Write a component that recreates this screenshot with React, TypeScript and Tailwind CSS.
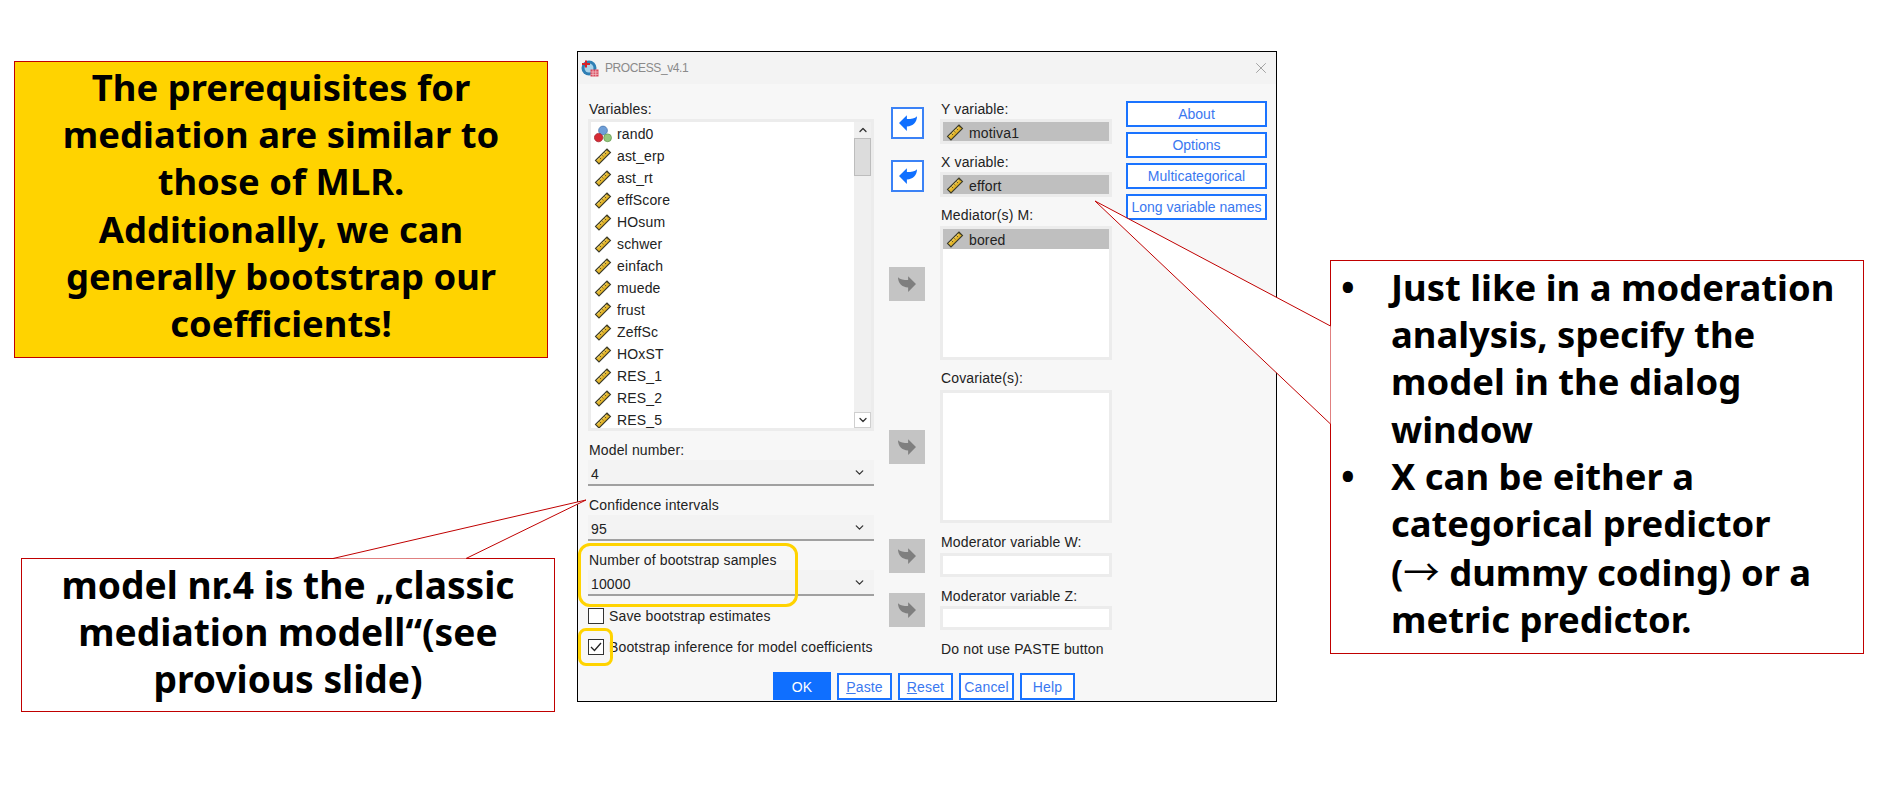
import { ChevronDown, ChevronUp, X } from "lucide-react";

const variables = [
  "rand0",
  "ast_erp",
  "ast_rt",
  "effScore",
  "HOsum",
  "schwer",
  "einfach",
  "muede",
  "frust",
  "ZeffSc",
  "HOxST",
  "RES_1",
  "RES_2",
  "RES_5",
];

function RulerIcon() {
  return (
    <svg width="18" height="18" viewBox="0 0 18 18" className="shrink-0">
      <polygon points="1.5,13.5 13,2 16.5,5.5 5,17" fill="#e3b52a" stroke="#3a3a2a" strokeWidth="1.1" />
      <path d="M5 10l1.8 1.8M7.5 7.5l1.8 1.8M10 5l1.8 1.8M12.5 2.8l1.8 1.8" stroke="#4a4020" strokeWidth="1" />
      <path d="M3 13.5l9.7-9.7" stroke="#f7e58a" strokeWidth="0.8" />
    </svg>
  );
}

function NominalIcon() {
  return (
    <svg width="18" height="18" viewBox="0 0 18 18" className="shrink-0">
      <circle cx="9" cy="5.5" r="4.4" fill="#6f9fd8" stroke="#3f6ea8" strokeWidth="0.7" />
      <circle cx="4.6" cy="12.6" r="4.2" fill="#d62a35" stroke="#9c1a22" strokeWidth="0.7" />
      <circle cx="13.6" cy="12.8" r="3.9" fill="#95c77e" stroke="#5d9448" strokeWidth="0.7" />
    </svg>
  );
}

function ProcessIcon() {
  return (
    <svg width="18" height="18" viewBox="0 0 18 18" className="shrink-0">
      <circle cx="8" cy="9" r="7.5" fill="#2f7fb5" />
      <circle cx="8" cy="9" r="4.5" fill="#a9d3ea" />
      <path d="M1 5h8M5 1.5v7" stroke="#d8232a" strokeWidth="2" />
      <rect x="9.5" y="10.5" width="8" height="7" fill="#d9465a" />
      <path d="M9.5 13h8M9.5 15.3h8M12 10.5v7M14.8 10.5v7" stroke="#f6d5da" strokeWidth="0.7" />
    </svg>
  );
}

function ArrowIcon({ color, flip }: { color: string; flip?: boolean }) {
  return (
    <svg width="18" height="16" viewBox="0 0 16 14" className={flip ? "-scale-x-100" : ""}>
      <path d="M0 7L7 0V3.5C11 3.5 14 3 16 1C16 6 12.5 10 7 10V14Z" fill={color} />
    </svg>
  );
}

function SendButton({ active, className }: { active?: boolean; className: string }) {
  if (active) {
    return (
      <div className={`ml-[2px] flex h-[32px] w-[33px] items-center justify-center border-2 border-[#3b82f6] bg-white ${className}`}>
        <ArrowIcon color="#0f6fff" />
      </div>
    );
  }
  return (
    <div className={`flex h-[34px] w-[36px] items-center justify-center bg-[#c4c4c4] ${className}`}>
      <ArrowIcon color="#7f7f7f" flip />
    </div>
  );
}

function Select({ value, className }: { value: string; className: string }) {
  return (
    <div className={`flex h-[26px] items-center justify-between border-b-2 border-[#a0a0a0] bg-[#f3f3f3] pl-[3px] pr-[8px] ${className}`}>
      <span className="pt-[3px]">{value}</span>
      <ChevronDown size={13} strokeWidth={2.4} color="#333" />
    </div>
  );
}

function Label({ text, className }: { text: string; className: string }) {
  return <div className={`flex h-[18px] items-center whitespace-nowrap pl-[1px] pt-[1px] ${className}`}>{text}</div>;
}

function VarBox({ name, className }: { name: string; className: string }) {
  return (
    <div className={`h-[25px] border-[3px] border-[#ececec] bg-white ${className}`}>
      <div className="flex h-[19px] items-center gap-[5px] bg-[#bfbfbf] pl-[3px]">
        <RulerIcon />
        <span className="pt-[2px]">{name}</span>
      </div>
    </div>
  );
}

function SideButton({ text }: { text: string }) {
  return (
    <div className="flex h-[26px] items-center justify-center whitespace-nowrap border-2 border-[#1a73ff] bg-white text-[#3a78f0]">
      {text}
    </div>
  );
}

function FooterButton({ label, under }: { label: string; under?: boolean }) {
  return (
    <div className="flex h-[27px] w-[55px] items-center justify-center border-2 border-[#1a73ff] bg-white pt-[1px] text-[#3a78f0]">
      {under ? (
        <span>
          <span className="underline">{label[0]}</span>
          {label.slice(1)}
        </span>
      ) : (
        label
      )}
    </div>
  );
}

function Dialog() {
  return (
    <div className="relative mt-[51px] ml-[22px] flex h-[651px] w-[700px] flex-col border border-black bg-[#f7f7f7] font-['Liberation_Sans',Arial,sans-serif] text-[14px] font-normal leading-none tracking-[0.15px] text-[#222]">
      <div className="flex h-[32px] items-center bg-[#f3f3f3] pl-[3px] pr-[6px] text-[#8a8a8a]">
        <ProcessIcon />
        <span className="ml-[6px] text-[12px] tracking-[-0.4px]">PROCESS_v4.1</span>
        <X size={18} strokeWidth={1.2} color="#9a9a9a" className="ml-auto" />
      </div>

      <div className="flex h-[588px] pl-[10px]">
        <div className="flex w-[286px] flex-col pt-[15px]">
          <Label text="Variables:" className="" />
          <div className="relative mt-[2px] h-[312px] overflow-hidden border-[3px] border-[#ececec] bg-white pt-[1px]">
            {variables.map((v, i) => (
              <div key={v} className="flex h-[22px] items-center gap-[5px] pl-[3px]">
                {i === 0 ? <NominalIcon /> : <RulerIcon />}
                <span>{v}</span>
              </div>
            ))}
            <div className="absolute inset-y-0 right-0 flex w-[17px] flex-col bg-[#f0f0f0]">
              <div className="flex h-[16px] items-center justify-center">
                <ChevronUp size={12} strokeWidth={2.6} color="#333" />
              </div>
              <div className="h-[38px] border border-[#bdbdbd] bg-[#dcdcdc]" />
              <div className="mt-auto flex h-[16px] items-center justify-center border border-[#cfcfcf] bg-white">
                <ChevronDown size={12} strokeWidth={2.6} color="#333" />
              </div>
            </div>
          </div>
          <Label text="Model number:" className="mt-[9px]" />
          <Select value="4" className="mt-[2px]" />
          <Label text="Confidence intervals" className="mt-[9px]" />
          <Select value="95" className="mt-[2px]" />
          <Label text="Number of bootstrap samples" className="mt-[9px]" />
          <Select value="10000" className="mt-[2px]" />
          <div className="mt-[12px] flex h-[16px] items-center gap-[5px]">
            <div className="h-[16px] w-[16px] border border-[#333] bg-white" />
            <span>Save bootstrap estimates</span>
          </div>
          <div className="mt-[15px] flex h-[16px] items-center gap-[5px]">
            <div className="flex h-[16px] w-[16px] items-center justify-center border border-[#333] bg-white">
              <svg width="12" height="10" viewBox="0 0 12 10">
                <path d="M1 5l3.5 3.5L11 1" fill="none" stroke="#222" strokeWidth="1.3" />
              </svg>
            </div>
            <span className="whitespace-nowrap">Bootstrap inference for model coefficients</span>
          </div>
        </div>

        <div className="ml-[15px] flex w-[36px] flex-col">
          <SendButton active className="mt-[23px]" />
          <SendButton active className="mt-[21px]" />
          <SendButton className="mt-[75px]" />
          <SendButton className="mt-[129px]" />
          <SendButton className="mt-[75px]" />
          <SendButton className="mt-[20px]" />
        </div>

        <div className="ml-[15px] flex w-[172px] flex-col pt-[15px]">
          <Label text="Y variable:" className="" />
          <VarBox name="motiva1" className="mt-[2px]" />
          <Label text="X variable:" className="mt-[8px]" />
          <VarBox name="effort" className="mt-[2px]" />
          <Label text="Mediator(s) M:" className="mt-[8px]" />
          <div className="mt-[3px] h-[134px] border-[3px] border-[#ececec] bg-white">
            <div className="flex h-[20px] items-center gap-[5px] bg-[#bfbfbf] pl-[3px]">
              <RulerIcon />
              <span className="pt-[1px]">bored</span>
            </div>
          </div>
          <Label text="Covariate(s):" className="mt-[8px]" />
          <div className="mt-[4px] h-[133px] border-[3px] border-[#ececec] bg-white" />
          <Label text="Moderator variable W:" className="mt-[9px]" />
          <div className="mt-[3px] h-[24px] border-[3px] border-[#ececec] bg-white" />
          <Label text="Moderator variable Z:" className="mt-[9px]" />
          <div className="mt-[2px] h-[24px] border-[3px] border-[#ececec] bg-white" />
          <Label text="Do not use PASTE button" className="mt-[9px]" />
        </div>

        <div className="ml-[14px] flex w-[141px] flex-col gap-[5px] pt-[17px] tracking-normal">
          <SideButton text="About" />
          <SideButton text="Options" />
          <SideButton text="Multicategorical" />
          <SideButton text="Long variable names" />
        </div>
      </div>

      <div className="flex items-end gap-[6px] pl-[195px]">
        <div className="flex h-[28px] w-[58px] items-center justify-center bg-[#0f6fff] pt-[1px] text-white">OK</div>
        <FooterButton label="Paste" under />
        <FooterButton label="Reset" under />
        <FooterButton label="Cancel" />
        <FooterButton label="Help" />
      </div>

      {/* yellow rings drawn over the dialog */}
      <div className="absolute left-[0px] top-[491px] h-[64px] w-[220px] rounded-[12px] border-[3px] border-[#ffd300]" />
      <div className="absolute left-[0px] top-[576px] h-[38px] w-[35px] rounded-[8px] border-[3px] border-[#ffd300]" />
    </div>
  );
}

export default function App() {
  return (
    <div className="relative flex h-[790px] w-[1900px] overflow-hidden bg-white font-['Noto_Sans',sans-serif] text-[36.4px] font-bold leading-[47.2px] text-black">
      <div className="ml-[14px] flex w-[541px] flex-col">
        <div className="mt-[61px] flex h-[297px] w-[534px] justify-center border border-[#c00000] bg-[#ffd300] pt-[2px] text-center">
          <p>
            The prerequisites for
            <br />
            mediation are similar to
            <br />
            those of MLR.
            <br />
            Additionally, we can
            <br />
            generally bootstrap our
            <br />
            coefficients!
          </p>
        </div>
        <div className="ml-[7px] mt-[200px] flex h-[154px] w-[534px] justify-center border border-[#c00000] bg-white pt-[2px] text-center text-[37.2px]">
          <p>
            model nr.4 is the „classic
            <br />
            mediation modell“(see
            <br />
            provious slide)
          </p>
        </div>
      </div>

      <Dialog />

      <div className="ml-[53px] mt-[260px] h-[394px] w-[534px] border border-[#c00000] bg-white pl-[10px] pt-[3px]">
        <div className="flex">
          <span className="w-[50px] shrink-0">•</span>
          <p>
            Just like in a moderation
            <br />
            analysis, specify the
            <br />
            model in the dialog
            <br />
            window
          </p>
        </div>
        <div className="flex">
          <span className="w-[50px] shrink-0">•</span>
          <p>
            X can be either a
            <br />
            categorical predictor
            <br />
            (<span className="font-['Noto_Sans_CJK_SC',sans-serif] font-normal">→</span> dummy coding) or a
            <br />
            metric predictor.
          </p>
        </div>
      </div>

      {/* callout tails */}
      <svg width="1900" height="790" className="pointer-events-none absolute inset-0">
        <polygon points="586,500 333,558.5 466,558.5" fill="#fff" />
        <polyline points="333,558.5 586,500 466,558.5" fill="none" stroke="#c00000" strokeWidth="1" />
        <polygon points="1095,201 1330.5,326 1330.5,424" fill="#fff" />
        <polyline points="1330.5,326 1095,201 1330.5,424" fill="none" stroke="#c00000" strokeWidth="1" />
      </svg>
    </div>
  );
}
